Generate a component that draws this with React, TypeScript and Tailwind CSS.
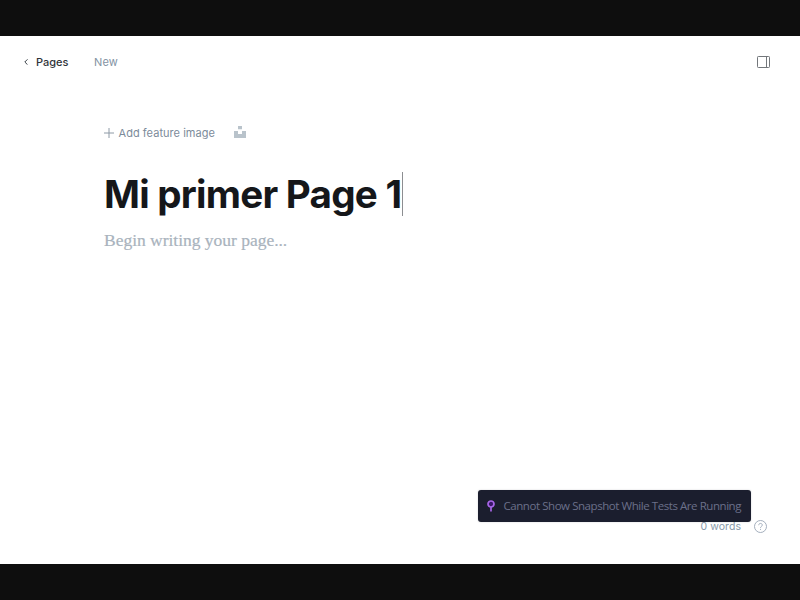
import React from 'react';

function TopBar() {
  return (
    <header className="flex h-[52px] items-center pl-[24px] pr-[30px] text-[11px] leading-4">
      <svg className="h-[6px] w-[4px]" viewBox="0 0 4 6" fill="none" stroke="#394047">
        <path d="M3.5 0.3 0.8 3l2.7 2.7" />
      </svg>
      <a className="ml-[8px] w-[58px] font-medium text-[#30343a]">Pages</a>
      <span className="tracking-[0.1px] text-[#8393a3]">New</span>
      <svg className="-mt-px ml-auto h-[12px] w-[13px]" viewBox="0 0 13 12" fill="none" stroke="#73777b">
        <rect x="0.5" y="0.5" width="12" height="11" rx="0.8" />
        <path d="M9.5 0.5v11" />
      </svg>
    </header>
  );
}

function FeatureImageRow() {
  return (
    <div className="flex h-4 items-center text-[11px] leading-4 text-[#7c8b9a]">
      <svg className="h-[10px] w-[10px]" viewBox="0 0 10 10" fill="none" stroke="#8e9aa6">
        <path d="M5 0v10M0 5h10" />
      </svg>
      <span className="ml-[4.5px] w-[115.5px] whitespace-nowrap tracking-[0.04px]">Add feature image</span>
      <svg className="-mt-[2px] h-[12px] w-[12px]" viewBox="0 0 12 12" fill="#b9c3cb">
        <path d="M4 0h4v3.3H4zM0 5h4v3h4V5h4v7H0z" />
      </svg>
    </div>
  );
}

function SnapshotNotice() {
  return (
    <div className="absolute left-[478px] top-[454px] flex h-[32px] w-[273px] items-center rounded-[3px] bg-[#1b1e2e] pl-[9px] shadow-[0_0_2px_rgba(27,30,46,0.2)]">
      <svg className="h-[12px] w-[8px]" viewBox="0 0 8 12" fill="#3a1769" stroke="#a866e8" strokeWidth="1.7">
        <circle cx="4" cy="4" r="3" />
        <path d="M4 7v4.5" />
      </svg>
      <span className="ml-[8.5px] whitespace-nowrap font-['Open_Sans',sans-serif] text-[11.5px] font-normal leading-4 tracking-[-0.44px] text-[#6b708a]">
        Cannot Show Snapshot While Tests Are Running
      </span>
    </div>
  );
}

export default function App() {
  return (
    <div className="flex h-[600px] w-[800px] flex-col overflow-hidden bg-[#0e0e0e] py-[36px] font-['Inter',sans-serif]">
      <main className="relative flex flex-1 flex-col bg-white">
        <TopBar />
        <section className="flex flex-col pl-[104px] pt-[37px]">
          <FeatureImageRow />
          <div className="mt-[30px] flex h-[46px] items-center">
            <h1 className="w-[298px] whitespace-nowrap text-[38.6px] font-bold leading-[46px] tracking-[-0.75px] text-[#15171a]">
              Mi primer Page 1
            </h1>
            <span className="h-[44px] w-px bg-[#8c8e91]" />
          </div>
          <p className="mt-[11px] whitespace-nowrap font-['Liberation_Serif',serif] text-[17.5px] leading-6 tracking-[-0.02px] text-[#a9b3bd] [-webkit-text-stroke:0.2px_#a9b3bd]">
            Begin writing your page...
          </p>
        </section>
        <footer className="mt-auto flex h-[76px] items-center justify-end pr-[33px]">
          <span className="mr-[13px] mt-px text-[10.5px] leading-4 tracking-[0.05px] text-[#8798a9]">0 words</span>
          <svg className="h-[13px] w-[13px]" viewBox="0 0 13 13" fill="none" stroke="#9aa6b5" strokeWidth="0.9">
            <circle cx="6.5" cy="6.5" r="6" />
            <path d="M4.7 5.2c0-2.4 3.6-2.3 3.6-.1 0 1.3-1.8 1.3-1.8 2.7M6.5 8.9v1" />
          </svg>
        </footer>
        <SnapshotNotice />
      </main>
    </div>
  );
}
